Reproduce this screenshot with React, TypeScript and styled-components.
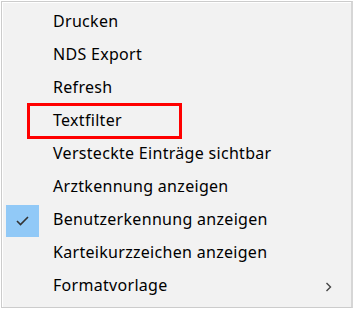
import styled, { createGlobalStyle, css } from "styled-components";

const GlobalStyle = createGlobalStyle`
  html, body {
    margin: 0;
    padding: 0;
    background: #ffffff;
  }
  #root {
    width: 354px;
    height: 309px;
  }
`;

const Frame = styled.div`
  box-sizing: border-box;
  width: 354px;
  height: 309px;
  padding: 1px;
  background: #ffffff;
`;

const Menu = styled.ul`
  box-sizing: border-box;
  height: 307px;
  margin: 0;
  padding: 4px 2px 0 2px;
  list-style: none;
  background: #f2f2f2;
  border: 1px solid #cccccc;
  border-right: 2px solid #d6d6d6;
  box-shadow: inset 1px 1px 0 #ffffff;
  font-family: "Noto Sans", "Open Sans", sans-serif;
  font-size: 16px;
  letter-spacing: 0.3px;
  color: #000000;
`;

const Item = styled.li<{ $marked?: boolean }>`
  position: relative;
  display: grid;
  grid-template-columns: 49px 1fr 24px;
  align-items: center;
  height: 33px;

  ${({ $marked }) =>
    $marked &&
    css`
      &::after {
        content: "";
        position: absolute;
        left: 23px;
        top: -2px;
        width: 155px;
        height: 36px;
        box-sizing: border-box;
        border: 3px solid #ff0000;
      }
    `}
`;

const CheckBox = styled.span<{ $checked?: boolean }>`
  display: flex;
  align-items: center;
  justify-content: center;
  width: 33px;
  height: 32px;
  margin-left: 2px;
  background: ${({ $checked }) => ($checked ? "#91c9f7" : "transparent")};
`;

const Label = styled.span`
  white-space: nowrap;
  line-height: 1;
  padding-bottom: 3px;
`;

const Arrow = styled.span`
  display: flex;
  align-items: center;
`;

type Entry = { label: string; checked?: boolean; marked?: boolean; sub?: boolean };

const entries: Entry[] = [
  { label: "Drucken" },
  { label: "NDS Export" },
  { label: "Refresh" },
  { label: "Textfilter", marked: true },
  { label: "Versteckte Einträge sichtbar" },
  { label: "Arztkennung anzeigen" },
  { label: "Benutzerkennung anzeigen", checked: true },
  { label: "Karteikurzzeichen anzeigen" },
  { label: "Formatvorlage", sub: true },
];

const Check = () => (
  <svg width="13" height="10" viewBox="0 0 13 10">
    <path d="M1 5 L4.5 8.5 L12 1" fill="none" stroke="#333" strokeWidth="1.6" />
  </svg>
);

const Chevron = () => (
  <svg width="7" height="10" viewBox="0 0 7 10">
    <path d="M1.5 1 L5.5 5 L1.5 9" fill="none" stroke="#444" strokeWidth="1.4" />
  </svg>
);

const App = () => {
  return (
    <>
      <GlobalStyle />
      <Frame>
        <Menu>
          {entries.map((entry) => (
            <Item key={entry.label} $marked={entry.marked}>
              <CheckBox $checked={entry.checked}>{entry.checked && <Check />}</CheckBox>
              <Label>{entry.label}</Label>
              <Arrow>{entry.sub && <Chevron />}</Arrow>
            </Item>
          ))}
        </Menu>
      </Frame>
    </>
  );
};

export default App;
